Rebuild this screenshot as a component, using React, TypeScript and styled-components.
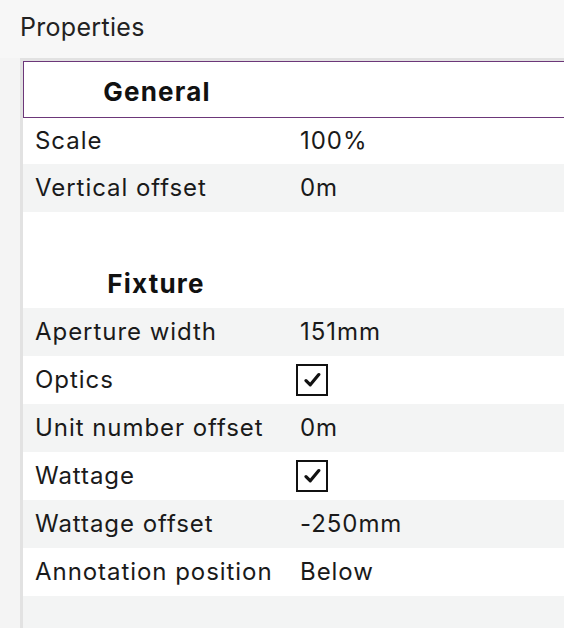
import styled, { createGlobalStyle } from "styled-components";

const GlobalStyle = createGlobalStyle`
  html, body {
    margin: 0;
    padding: 0;
    background: #f7f7f7;
  }
  body {
    font-family: Inter, "Noto Sans", sans-serif;
    color: #1c1c1c;
  }
`;

const Page = styled.div`
  width: 564px;
  height: 628px;
  overflow: hidden;
  display: flex;
  flex-direction: column;
  background: #f7f7f7;
`;

const Header = styled.div`
  height: 58px;
  flex: none;
  display: flex;
  align-items: center;
  padding-left: 20px;
  padding-bottom: 4px;
  box-sizing: border-box;
  font-size: 25px;
  letter-spacing: 0.3px;
  color: #222222;
`;

const Body = styled.div`
  flex: 1;
  display: flex;
  background: #f4f4f4;
`;

const Panel = styled.div`
  flex: 1;
  margin-left: 20px;
  border-top: 3px solid #e2e2e2;
  border-left: 3px solid #e2e2e2;
  background: #f3f4f4;
  overflow: hidden;
`;

const Table = styled.div`
  width: 620px;
  display: grid;
  grid-template-columns: 266px 1fr;
`;

const Heading = styled.div<{ $boxed?: boolean; $height: number; $bottom: number }>`
  grid-column: 1 / -1;
  height: ${p => p.$height}px;
  box-sizing: border-box;
  background: #ffffff;
  display: grid;
  grid-template-columns: 266px 1fr;
  align-items: end;
  padding-bottom: ${p => p.$bottom}px;
  border: ${p => (p.$boxed ? "1px solid #6c3779" : "none")};
  font-size: 26px;
  font-weight: 700;
  letter-spacing: 1.2px;
  color: #111111;

  > span {
    text-align: center;
  }
`;

const Row = styled.div<{ $shade?: boolean; $height?: number }>`
  grid-column: 1 / -1;
  height: ${p => p.$height ?? 48}px;
  box-sizing: border-box;
  padding-bottom: 2px;
  display: grid;
  grid-template-columns: 266px 1fr;
  align-items: center;
  background: ${p => (p.$shade ? "#f3f4f4" : "#ffffff")};
  font-size: 24px;
  letter-spacing: 0.95px;
  color: #1a1a1a;
`;

const Label = styled.div`
  padding-left: 12px;
  white-space: nowrap;
`;

const Value = styled.div`
  padding-left: 11px;
  white-space: nowrap;
  display: flex;
  align-items: center;
`;

const Spacer = styled.div`
  grid-column: 1 / -1;
  height: 48px;
  background: #ffffff;
`;

const CheckBox = styled.span`
  width: 28px;
  height: 28px;
  margin-left: -4px;
  margin-top: 2px;
  border: 2px solid #111111;
  background: #ffffff;
  display: flex;
  align-items: center;
  justify-content: center;
`;

const Check = () => (
  <svg width="17" height="16" viewBox="0 0 17 16">
    <path
      d="M2 8.6 L6.3 12.8 L14.8 2.6"
      fill="none"
      stroke="#111"
      strokeWidth="3.2"
      strokeLinecap="round"
      strokeLinejoin="round"
    />
  </svg>
);

type Prop = { label: string; value?: string; checked?: boolean };

const general: Prop[] = [
  { label: "Scale", value: "100%" },
  { label: "Vertical offset", value: "0m" },
];

const fixture: Prop[] = [
  { label: "Aperture width", value: "151mm" },
  { label: "Optics", checked: true },
  { label: "Unit number offset", value: "0m" },
  { label: "Wattage", checked: true },
  { label: "Wattage offset", value: "-250mm" },
  { label: "Annotation position", value: "Below" },
];

const renderRow = (p: Prop, i: number, firstHeight?: number) => (
  <Row key={p.label} $shade={i % 2 === 1} $height={i === 0 ? firstHeight : undefined}>
    <Label>{p.label}</Label>
    <Value>
      {p.checked !== undefined ? (
        <CheckBox>{p.checked && <Check />}</CheckBox>
      ) : (
        p.value
      )}
    </Value>
  </Row>
);

const App = () => (
  <>
    <GlobalStyle />
    <Page>
      <Header>Properties</Header>
      <Body>
        <Panel>
          <Table>
            <Heading $boxed $height={57} $bottom={10}>
              <span>General</span>
            </Heading>
            {general.map((p, i) => renderRow(p, i, 46))}
            <Spacer />
            <Heading $height={48} $bottom={9}>
              <span>Fixture</span>
            </Heading>
            {fixture.map((p, i) => renderRow(p, i + 1))}
          </Table>
        </Panel>
      </Body>
    </Page>
  </>
);

export default App;
